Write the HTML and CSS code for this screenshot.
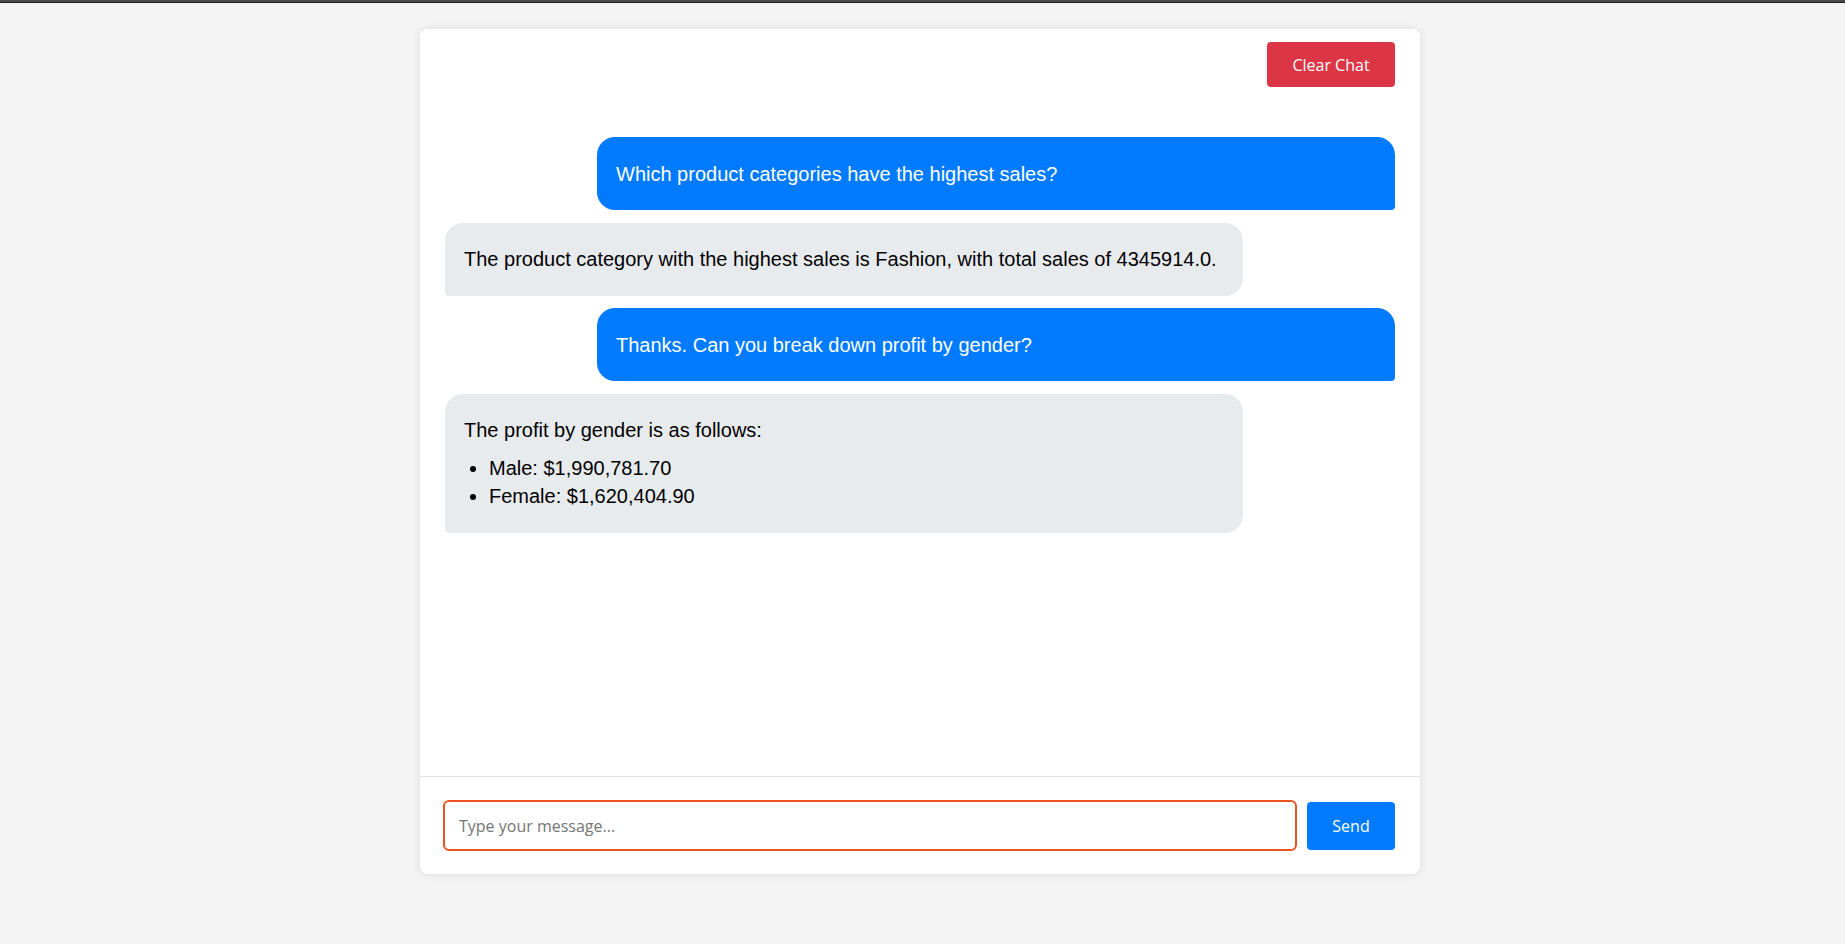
FILE: index.html
```html
<!DOCTYPE html>
<html lang="en">
<head>
<meta charset="utf-8">
<title>Chat</title>
<link rel="stylesheet" href="styles.css">
</head>
<body>
<div class="topbar"></div>
<div class="page">
  <div class="chat-card">
    <div class="chat-header">
      <button class="btn btn-danger">Clear Chat</button>
    </div>
    <div class="messages">
      <div class="msg user"><p>Which product categories have the highest sales?</p></div>
      <div class="msg bot"><p>The product category with the highest sales is Fashion, with total sales of 4345914.0.</p></div>
      <div class="msg user"><p>Thanks. Can you break down profit by gender?</p></div>
      <div class="msg bot">
        <p>The profit by gender is as follows:</p>
        <ul>
          <li>Male: $1,990,781.70</li>
          <li>Female: $1,620,404.90</li>
        </ul>
      </div>
    </div>
    <div class="chat-footer">
      <input class="chat-input" type="text" placeholder="Type your message...">
      <button class="btn btn-primary">Send</button>
    </div>
  </div>
</div>
</body>
</html>
```
FILE: styles.css
```css
html, body {
  margin: 0;
  padding: 0;
}
body {
  background: #f4f4f4;
  font-family: "Liberation Sans", Arial, sans-serif;
  height: 944px;
  overflow: hidden;
}
.topbar {
  height: 3px;
  background: #4a4a4a;
  border-bottom: 1px solid #222;
  box-sizing: border-box;
}
.page {
  padding: 26px 5px 0 0;
}
.chat-card {
  width: 1000px;
  height: 845px;
  margin: 0 auto;
  background: #fff;
  border-radius: 8px;
  box-shadow: 0 0 10px rgba(0, 0, 0, 0.1);
  display: flex;
  flex-direction: column;
  overflow: hidden;
}
.chat-header {
  display: flex;
  justify-content: flex-end;
  padding: 13px 25px 0;
}
.btn {
  font-family: "Open Sans", "Noto Sans", sans-serif;
  font-size: 16px;
  color: #fff;
  border: none;
  border-radius: 4px;
  cursor: pointer;
}
.btn-danger {
  background: #dc3545;
  width: 128px;
  height: 45px;
}
.btn-primary {
  background: #007bff;
  width: 88px;
  height: 48px;
  flex: none;
}
.messages {
  flex: 1;
  display: flex;
  flex-direction: column;
  gap: 12.5px;
  padding: 50px 25px 20px;
  overflow: hidden;
}
.msg {
  width: 80%;
  padding: 12.5px 19px;
  font-size: 20px;
  line-height: 28px;
  color: #000;
}
.msg p {
  margin: 10px 0;
}
.msg ul {
  margin: 10px 0;
  padding-left: 25px;
}
.msg li {
  line-height: 28px;
}
.msg.user {
  align-self: flex-end;
  background: #007bff;
  color: #fff;
  border-radius: 18px 18px 4px 18px;
}
.msg.bot {
  align-self: flex-start;
  background: #e8ebee;
  border-radius: 18px 18px 18px 4px;
}
.chat-footer {
  display: flex;
  align-items: center;
  gap: 10px;
  border-top: 1px solid #dee2e6;
  padding: 23px 25px 23px 23px;
}
.chat-input {
  flex: 1;
  height: 51px;
  box-sizing: border-box;
  border: 2px solid #e95420;
  border-radius: 6px;
  padding: 0 14px;
  font-family: "Open Sans", "Noto Sans", sans-serif;
  font-size: 16px;
  color: #222;
  outline: none;
}
.chat-input::placeholder {
  color: #757575;
}
```
